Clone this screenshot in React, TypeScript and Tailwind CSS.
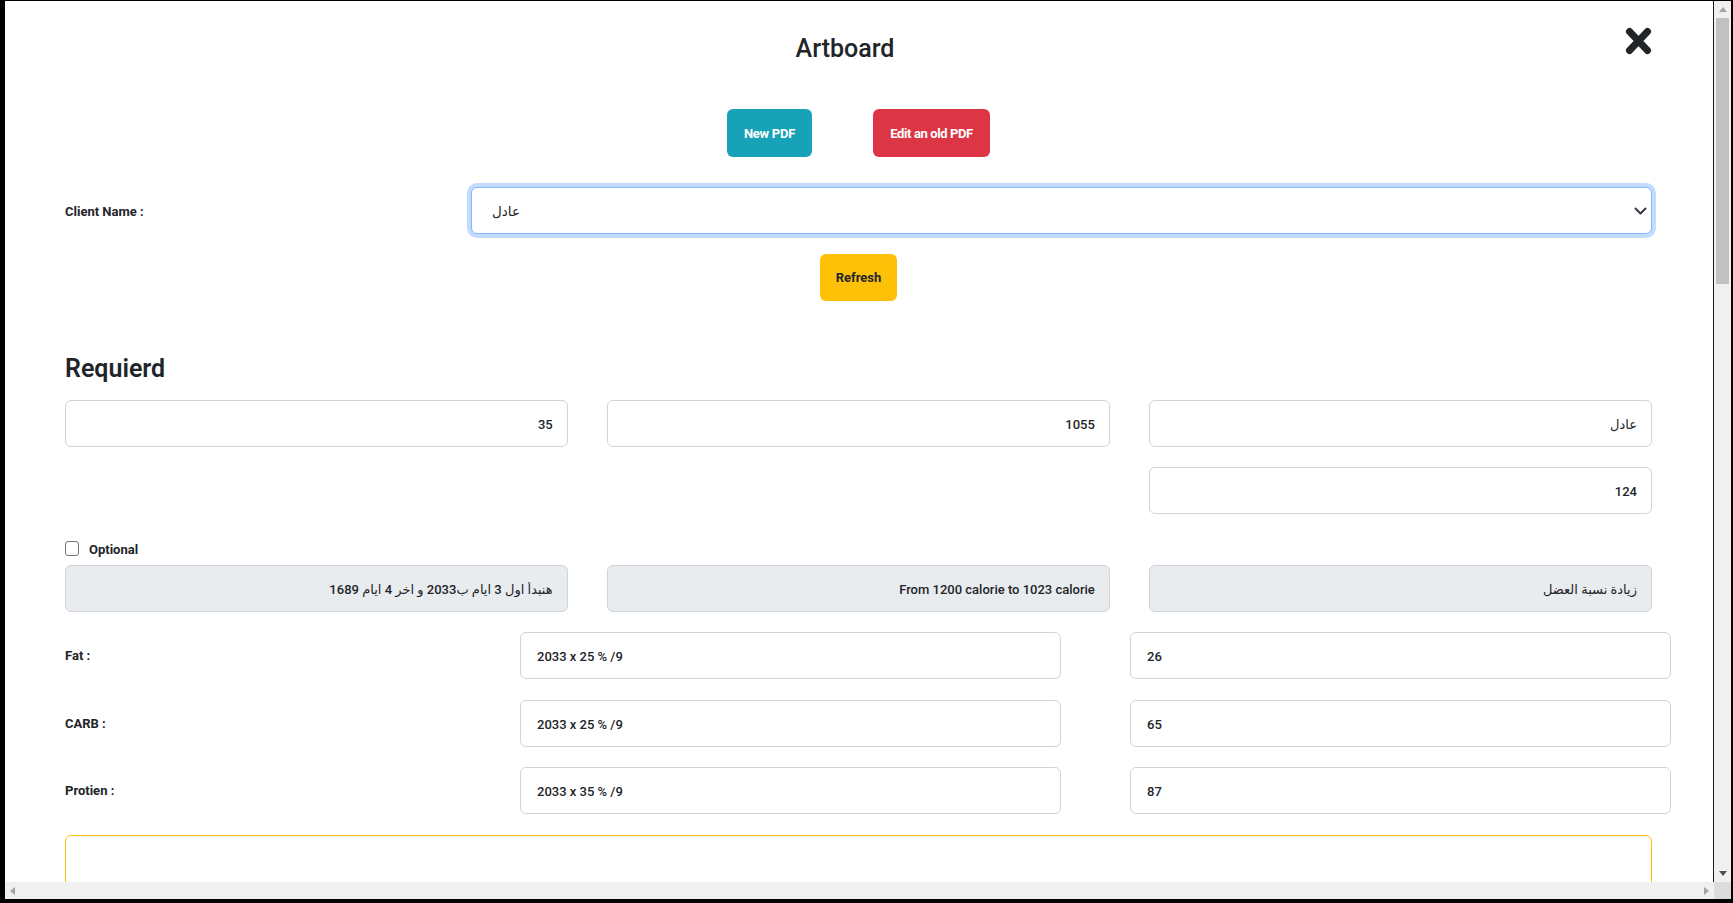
import React from "react";

const inputBase =
  "block h-[47px] w-full rounded-[6px] border border-[#ced4da] text-[13px] font-medium text-[#212529] outline-none";

function RInput({ value, gray = false, rtl = false }: { value: string; gray?: boolean; rtl?: boolean }) {
  return (
    <input
      readOnly
      dir={rtl ? "rtl" : "ltr"}
      defaultValue={value}
      className={`${inputBase} text-right pr-[14px] pl-[14px] pt-[1px] ${rtl ? "text-[13.5px]" : ""} ${gray ? "bg-[#e9ecef]" : "bg-white"}`}
    />
  );
}

function MacroRow({ label, calc, value, mt }: { label: string; calc: string; value: string; mt: string }) {
  return (
    <div className={`flex items-center -mr-[19px] ${mt}`}>
      <div className="w-[455px] pt-[1px] text-[13px] font-bold text-[#212529]">{label}</div>
      <input readOnly defaultValue={calc} className={`${inputBase} !w-[541px] bg-white pl-4 pt-[1px]`} />
      <input readOnly defaultValue={value} className={`${inputBase} !w-[541px] ml-[69px] bg-white pl-4 pt-[1px]`} />
    </div>
  );
}

export default function App() {
  return (
    <div className="w-[1733px] h-[903px] bg-black pt-[1px] pl-[5px] pr-[2px] pb-[4px] flex flex-col font-['Roboto','DejaVu_Sans',sans-serif] overflow-hidden">
      <div className="flex flex-1 min-h-0">
        {/* content */}
        <div className="flex-1 bg-white overflow-hidden pl-[60px] pr-[61px]">
          {/* header */}
          <div className="flex items-start pt-[33px]">
            <h1 className="flex-1 text-center text-[25px] leading-[30px] font-medium text-[#212529]">Artboard</h1>
            <button className="w-[27px] h-[28px] -mt-[7px] flex items-center justify-center" aria-label="close">
              <svg width="27" height="28" viewBox="0 0 27 28">
                <path d="M4.5 4.5 L22.5 23.5 M22.5 4.5 L4.5 23.5" stroke="#212529" strokeWidth="7" strokeLinecap="round" fill="none" />
              </svg>
            </button>
          </div>

          {/* pdf buttons */}
          <div className="flex justify-center gap-[61px] mt-[45px]">
            <button className="h-[48px] w-[85px] pt-[1px] rounded-[6px] bg-[#17a2b8] text-white text-[13px] font-bold tracking-[-0.02em]">New PDF</button>
            <button className="h-[48px] w-[117px] pt-[1px] rounded-[6px] bg-[#dc3545] text-white text-[13px] font-bold tracking-[-0.03em]">Edit an old PDF</button>
          </div>

          {/* client select */}
          <div className="flex items-center mt-[30px]">
            <div className="w-[406px] pt-[2px] text-[13px] font-bold text-[#212529]">Client Name :</div>
            <div className="flex-1 h-[47px] rounded-[6px] border border-[#86b7fe] shadow-[0_0_0_4px_rgba(13,110,253,0.25)] bg-white flex items-center justify-between pl-[20px] pr-[4px]">
              <span className="pt-[1px] text-[13.5px] font-medium text-[#212529]">عادل</span>
              <svg width="13" height="8" viewBox="0 0 13 8">
                <path d="M1.5 1.5 L6.5 6.5 L11.5 1.5" stroke="#343a40" strokeWidth="2" strokeLinecap="round" strokeLinejoin="round" fill="none" />
              </svg>
            </div>
          </div>

          {/* refresh */}
          <div className="flex justify-center mt-[20px]">
            <button className="h-[47px] w-[77px] pt-[1px] rounded-[6px] bg-[#ffc107] text-[#212529] text-[13px] font-bold">Refresh</button>
          </div>

          {/* required */}
          <h2 className="mt-[53px] text-[25px] leading-[30px] font-semibold text-[#212529]">Requierd</h2>

          <div className="grid grid-cols-3 gap-x-[39.5px] gap-y-[20px] mt-[16px]">
            <RInput value="35" />
            <RInput value="1055" />
            <RInput value="عادل" rtl />
            <div />
            <div />
            <RInput value="124" />
          </div>

          {/* optional */}
          <div className="flex items-center h-[20px] mt-[24px] gap-[10px]">
            <input type="checkbox" className="appearance-none w-[14px] h-[15px] rounded-[3px] border border-[#767676] bg-white" />
            <span className="pt-[3px] text-[13px] font-bold text-[#212529]">Optional</span>
          </div>

          <div className="grid grid-cols-3 gap-x-[39.5px] mt-[7px]">
            <RInput value="هنبدأ اول 3 ايام ب2033 و اخر 4 ايام 1689" gray rtl />
            <RInput value="From 1200 calorie to 1023 calorie" gray />
            <RInput value="زيادة نسبة العضل" gray rtl />
          </div>

          <MacroRow label="Fat :" calc="2033 x 25 % /9" value="26" mt="mt-[20px]" />
          <MacroRow label="CARB :" calc="2033 x 25 % /9" value="65" mt="mt-[21px]" />
          <MacroRow label="Protien :" calc="2033 x 35 % /9" value="87" mt="mt-[20px]" />

          <textarea
            readOnly
            className="block mt-[21px] w-full h-[140px] rounded-[6px] border border-[#ffc107] bg-white outline-none resize-none"
          />
        </div>

        {/* vertical scrollbar */}
        <div className="w-[18px] border-l border-[#1a1a1a] bg-[#f0f0f0] flex flex-col items-center">
          <div className="h-[17px] w-full flex items-center justify-center">
            <svg width="8" height="5" viewBox="0 0 8 5"><path d="M4 0 L8 5 L0 5 Z" fill="#a3a3a3" /></svg>
          </div>
          <div className="w-[13px] h-[266px] bg-[#c1c1c1]" />
          <div className="flex-1" />
          <div className="h-[17px] w-full flex items-center justify-center">
            <svg width="8" height="5" viewBox="0 0 8 5"><path d="M0 0 L8 0 L4 5 Z" fill="#505050" /></svg>
          </div>
        </div>
      </div>

      {/* horizontal scrollbar */}
      <div className="flex h-[17px]">
        <div className="flex-1 bg-[#f0f0f0] flex items-center justify-between px-[5px]">
          <svg width="5" height="8" viewBox="0 0 5 8"><path d="M5 0 L5 8 L0 4 Z" fill="#a3a3a3" /></svg>
          <svg width="5" height="8" viewBox="0 0 5 8"><path d="M0 0 L5 4 L0 8 Z" fill="#a3a3a3" /></svg>
        </div>
        <div className="w-[17px] bg-[#dcdcdc]" />
      </div>
    </div>
  );
}
